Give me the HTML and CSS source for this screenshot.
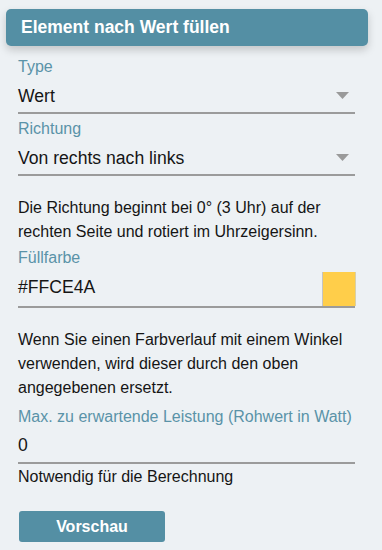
FILE: index.html
```html
<!DOCTYPE html>
<html lang="de">
<head>
<meta charset="utf-8">
<title>Element nach Wert füllen</title>
<link rel="stylesheet" href="styles.css">
</head>
<body>
<div class="header">Element nach Wert füllen</div>
<form class="form">
  <div class="label label-first">Type</div>
  <div class="field select">
    <span class="value">Wert</span>
    <svg class="arrow" width="13" height="7" viewBox="0 0 13 7"><polygon points="0,0 13,0 6.5,7" fill="#9a9a9a"/></svg>
  </div>
  <div class="label">Richtung</div>
  <div class="field select">
    <span class="value">Von rechts nach links</span>
    <svg class="arrow" width="13" height="7" viewBox="0 0 13 7"><polygon points="0,0 13,0 6.5,7" fill="#9a9a9a"/></svg>
  </div>
  <p class="note">Die Richtung beginnt bei 0° (3 Uhr) auf der rechten Seite und rotiert im Uhrzeigersinn.</p>
  <div class="label label-tight">Füllfarbe</div>
  <div class="field color-field">
    <span class="value color-value">#FFCE4A</span>
    <span class="swatch"></span>
  </div>
  <p class="note">Wenn Sie einen Farbverlauf mit einem Winkel verwenden, wird dieser durch den oben angegebenen ersetzt.</p>
  <div class="label label-max">Max. zu erwartende Leistung (Rohwert in Watt)</div>
  <div class="field input">
    <span class="value">0</span>
  </div>
  <div class="helper">Notwendig für die Berechnung</div>
  <button type="button" class="btn">Vorschau</button>
</form>
</body>
</html>
```

FILE: styles.css
```css
html, body {
  margin: 0;
  padding: 0;
}
body {
  background: #edf1f4;
  font-family: "Liberation Sans", Arial, sans-serif;
  font-size: 16px;
  line-height: 24px;
  color: #151515;
  padding-top: 9px;
  width: 382px;
  height: 550px;
  box-sizing: border-box;
  overflow: hidden;
}
.header {
  margin: 0 14px 0 6px;
  height: 37px;
  line-height: 37px;
  padding-left: 15px;
  background: #548fa4;
  color: #ffffff;
  font-weight: bold;
  font-size: 17.5px;
  border-radius: 5px;
  box-shadow: 0 4px 9px rgba(0, 0, 0, 0.18);
}
.form {
  padding: 0 27px 0 18px;
  margin: 0;
}
.label {
  color: #5a93a8;
  margin-top: 3px;
}
.label-first {
  margin-top: 9px;
}
.label-tight {
  margin-top: 2px;
}
.label-max {
  margin-top: 5px;
}
.field {
  display: flex;
  align-items: center;
  border-bottom: 2px solid #9b9b9b;
}
.value {
  font-size: 17.6px;
  line-height: 24px;
}
.select {
  padding: 5px 6px 4px 0;
  justify-content: space-between;
}
.arrow {
  display: block;
  margin-top: -1px;
}
.note {
  margin: 20px 0 0;
}
.color-field {
  margin-top: 2px;
  height: 34px;
  align-items: flex-start;
  justify-content: space-between;
}
.color-value {
  padding-top: 3px;
}
.swatch {
  width: 34px;
  height: 34px;
  background: #ffce4a;
  border-left: 1px solid #c4c4c4;
  box-sizing: border-box;
  box-shadow: inset -1px 0 0 #d8cfa8;
  margin-right: -1px;
}
.input {
  padding: 4px 0 5px;
}
.helper {
  margin-top: 1px;
}
.btn {
  display: block;
  margin: 22px 0 0 1px;
  width: 146px;
  height: 31px;
  padding: 0;
  border: none;
  border-radius: 3px;
  background: #548fa4;
  color: #ffffff;
  font-family: "Liberation Sans", Arial, sans-serif;
  font-size: 16px;
  font-weight: bold;
  line-height: 31px;
  text-align: center;
}
```
